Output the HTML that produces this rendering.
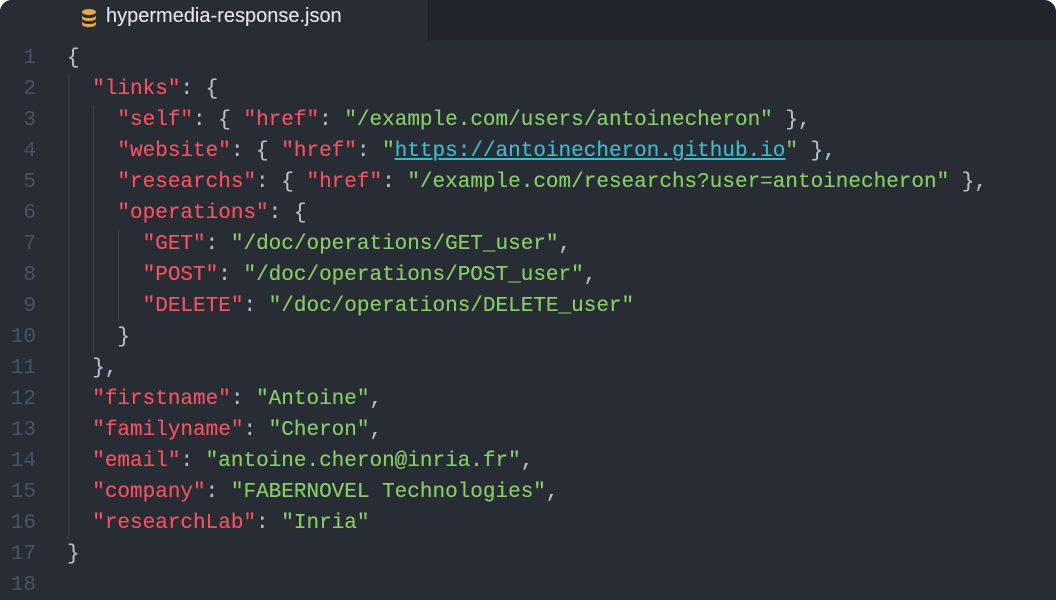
<!DOCTYPE html><html><head><style>
body{margin:0;width:1056px;height:602px;background:#fff;overflow:hidden}
.win{position:absolute;left:0;top:0;width:1056px;height:600px;background:#282c34;border-radius:12px 12px 0 0;overflow:hidden}
.bar{position:absolute;left:0;top:0;width:1056px;height:40px;background:#21252b}
.tab{position:absolute;left:0;top:0;width:428px;height:41px;background:#282c34;border-right:1px solid #181a1f}
.tab span{position:absolute;left:106px;top:5px;font:20px "Liberation Sans",sans-serif;color:#dfe2e8;text-shadow:0 0 0.3px #dfe2e8}
.code{position:absolute;left:0;top:43px;font:21px/31.05px "Liberation Mono",monospace;white-space:pre;color:#b5bcc9}
.l{text-shadow:0 0 0.4px currentColor}
.ln{position:absolute;left:0;width:36px;text-align:right;color:#4b5263}
.l{position:absolute;left:67px}
.k{color:#f0525f}.s{color:#86cc66}.u{color:#3fb8cc;text-decoration:underline}
.g{position:absolute;width:1px;background:#3b4048}
</style></head><body><div class="win">
<div class="bar"></div><div class="tab">
<svg style="position:absolute;left:80px;top:8px" width="18" height="20" viewBox="0 0 18 20"><g fill="#e5a84b"><ellipse cx="9" cy="4" rx="7" ry="3"/><path d="M2 7c0 2 3 3 7 3s7-1 7-3v3c0 2-3 3-7 3s-7-1-7-3z"/><path d="M2 13c0 2 3 3 7 3s7-1 7-3v3c0 2-3 3-7 3s-7-1-7-3z"/></g></svg>
<span>hypermedia-response.json</span></div>
<div class="g" style="left:68px;top:74px;height:465px"></div>
<div class="g" style="left:93px;top:105px;height:248px"></div>
<div class="g" style="left:118px;top:229px;height:93px"></div>
<div class="code">
<div class="ln" style="top:0">1</div><div class="l" style="top:0">{</div>
<div class="ln" style="top:31px">2</div><div class="l" style="top:31px">  <span class="k">"links"</span>: {</div>
<div class="ln" style="top:62px">3</div><div class="l" style="top:62px">    <span class="k">"self"</span>: { <span class="k">"href"</span>: <span class="s">"/example.com/users/antoinecheron"</span> },</div>
<div class="ln" style="top:93px">4</div><div class="l" style="top:93px">    <span class="k">"website"</span>: { <span class="k">"href"</span>: <span class="s">"<span class="u">https://antoinecheron.github.io</span>"</span> },</div>
<div class="ln" style="top:124px">5</div><div class="l" style="top:124px">    <span class="k">"researchs"</span>: { <span class="k">"href"</span>: <span class="s">"/example.com/researchs?user=antoinecheron"</span> },</div>
<div class="ln" style="top:155px">6</div><div class="l" style="top:155px">    <span class="k">"operations"</span>: {</div>
<div class="ln" style="top:186px">7</div><div class="l" style="top:186px">      <span class="k">"GET"</span>: <span class="s">"/doc/operations/GET_user"</span>,</div>
<div class="ln" style="top:217px">8</div><div class="l" style="top:217px">      <span class="k">"POST"</span>: <span class="s">"/doc/operations/POST_user"</span>,</div>
<div class="ln" style="top:248px">9</div><div class="l" style="top:248px">      <span class="k">"DELETE"</span>: <span class="s">"/doc/operations/DELETE_user"</span></div>
<div class="ln" style="top:279px">10</div><div class="l" style="top:279px">    }</div>
<div class="ln" style="top:310px">11</div><div class="l" style="top:310px">  },</div>
<div class="ln" style="top:341px">12</div><div class="l" style="top:341px">  <span class="k">"firstname"</span>: <span class="s">"Antoine"</span>,</div>
<div class="ln" style="top:372px">13</div><div class="l" style="top:372px">  <span class="k">"familyname"</span>: <span class="s">"Cheron"</span>,</div>
<div class="ln" style="top:403px">14</div><div class="l" style="top:403px">  <span class="k">"email"</span>: <span class="s">"antoine.cheron@inria.fr"</span>,</div>
<div class="ln" style="top:434px">15</div><div class="l" style="top:434px">  <span class="k">"company"</span>: <span class="s">"FABERNOVEL Technologies"</span>,</div>
<div class="ln" style="top:465px">16</div><div class="l" style="top:465px">  <span class="k">"researchLab"</span>: <span class="s">"Inria"</span></div>
<div class="ln" style="top:496px">17</div><div class="l" style="top:496px">}</div>
<div class="ln" style="top:527px">18</div>
</div></div></body></html>
